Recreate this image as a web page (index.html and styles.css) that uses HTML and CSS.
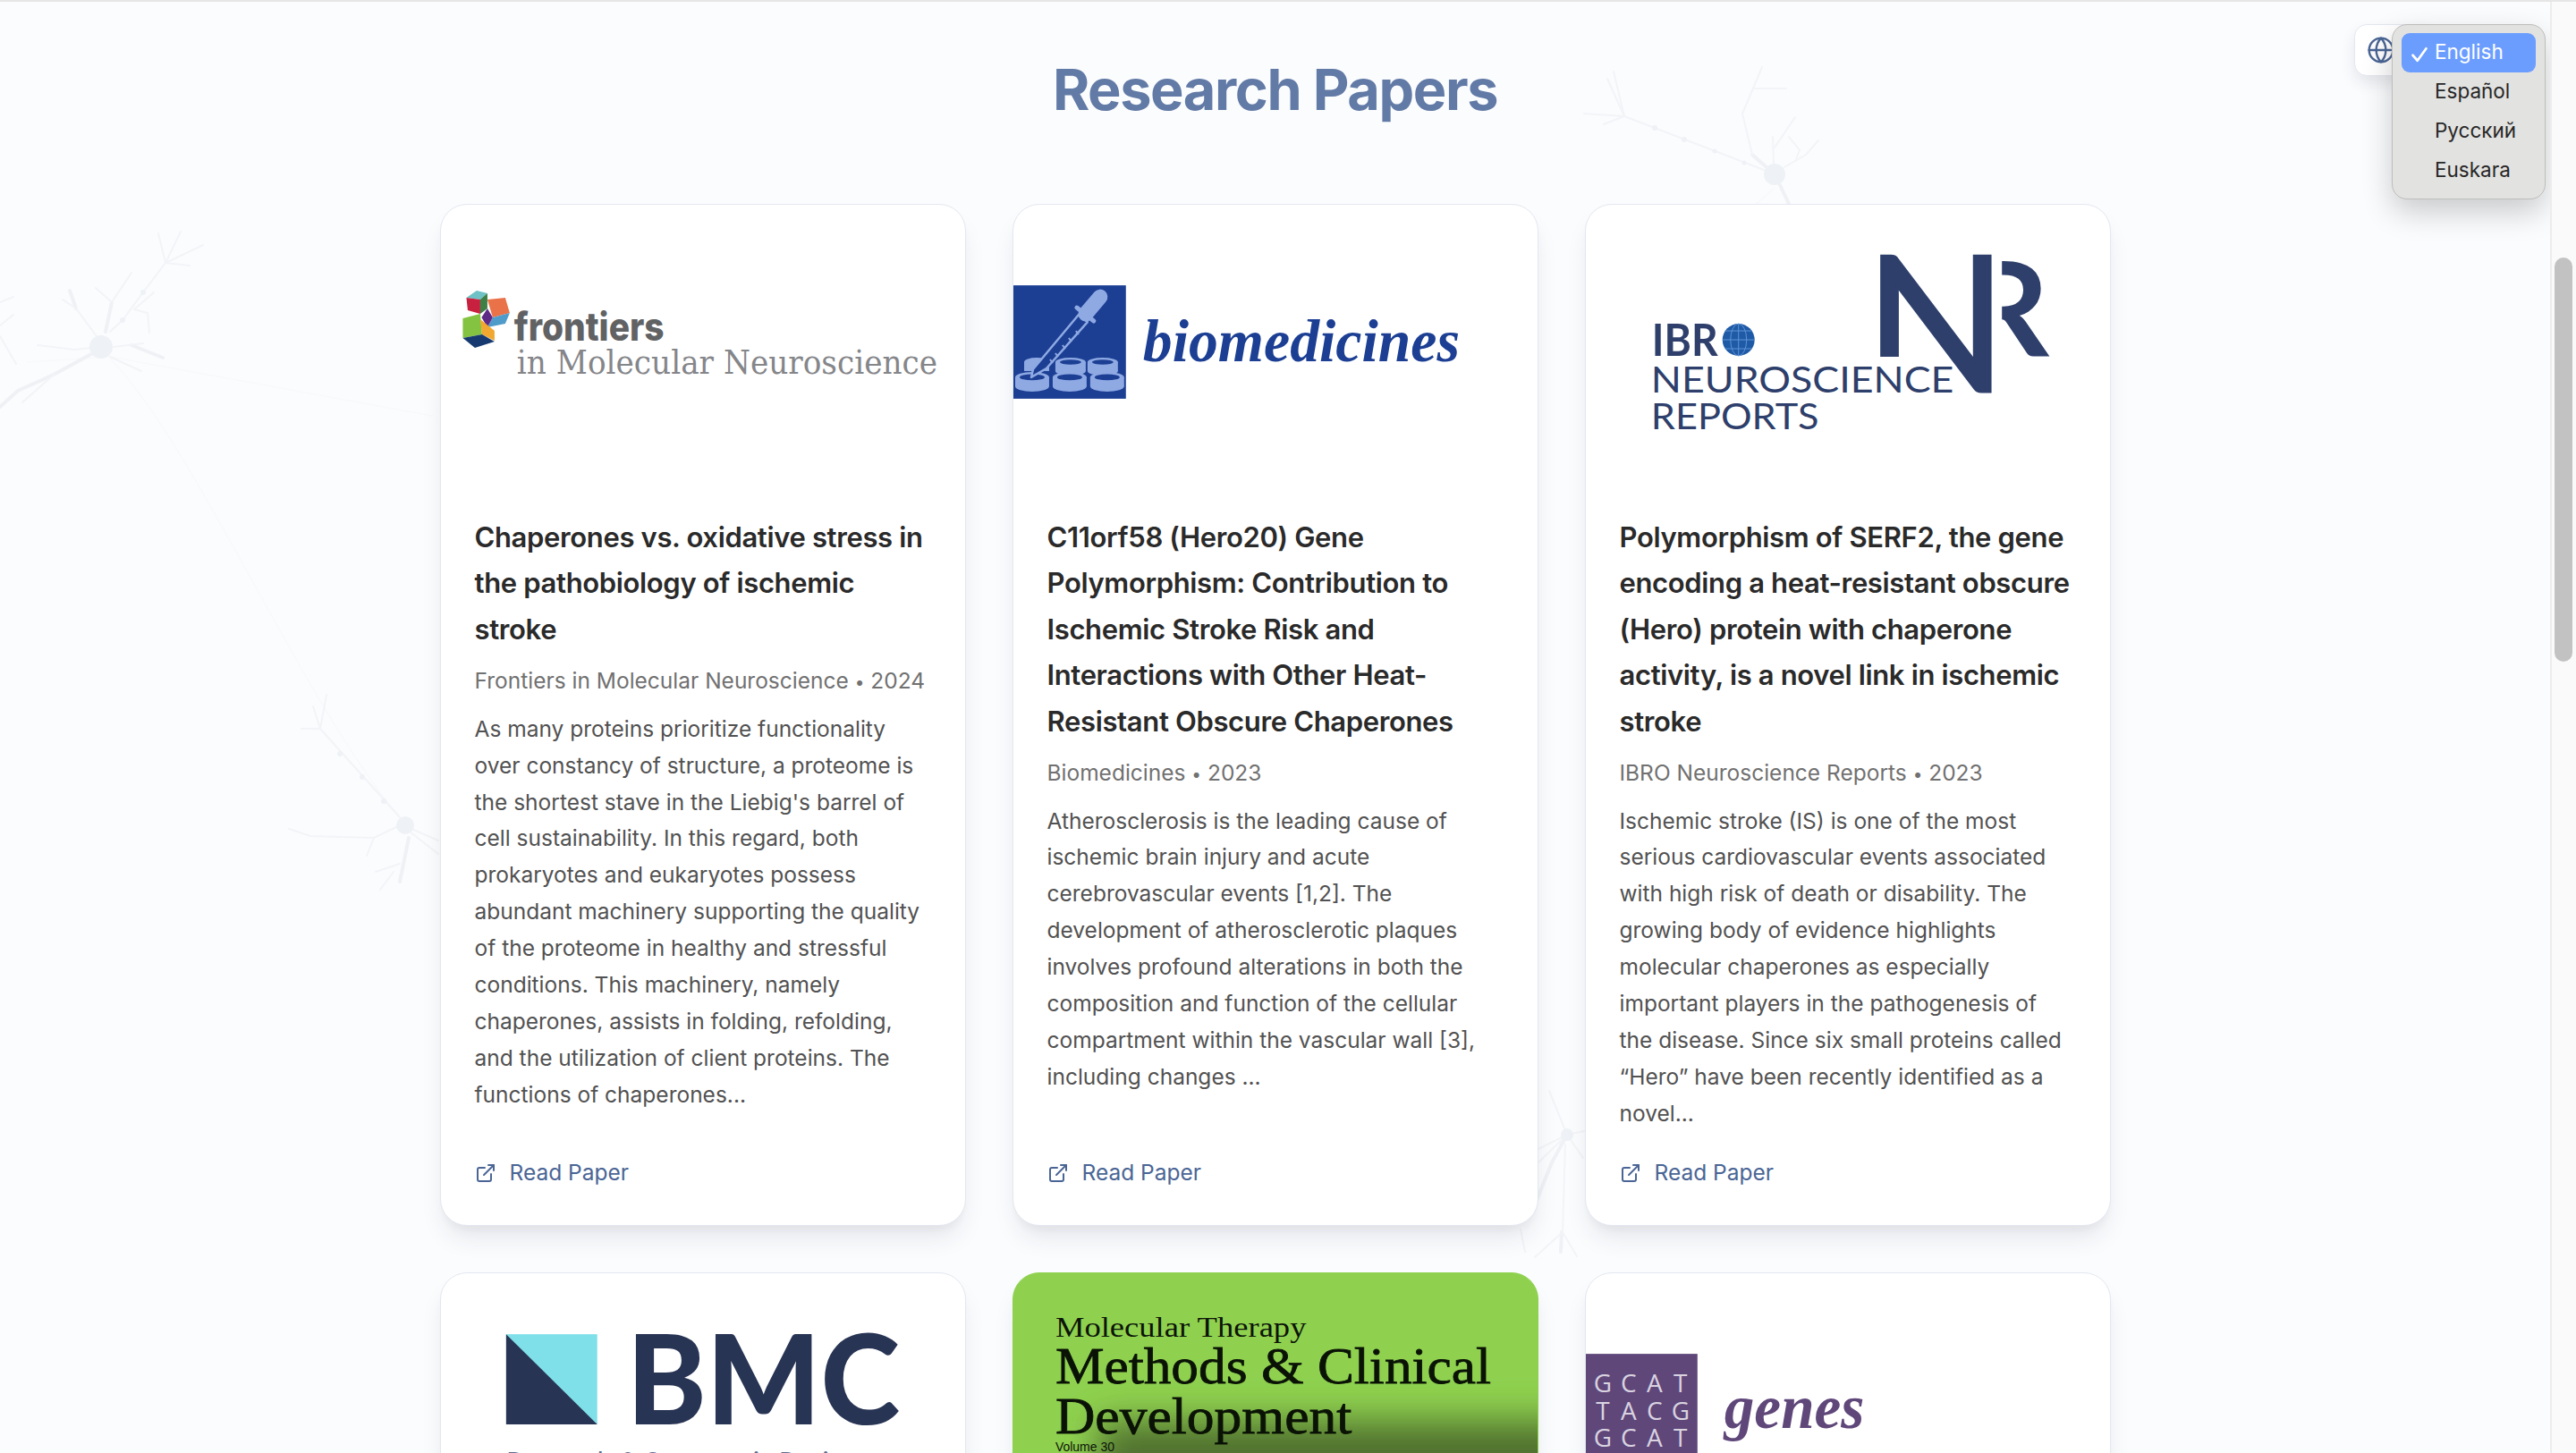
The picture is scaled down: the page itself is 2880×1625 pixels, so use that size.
FILE: index.html
```html
<!DOCTYPE html>
<html lang="en">
<head>
<meta charset="utf-8">
<title>Research Papers</title>
<link rel="stylesheet" href="styles.css">
</head>
<body>
<div class="topline"></div>
<div class="frame">
  <div class="page">
    <svg class="neurons" viewBox="0 0 2851 1625" width="2851" height="1625" aria-hidden="true">
      <g class="axon-faint">
        <path d="M123 399L483 465"/>
        <path d="M123 401C220 500 340 790 447 914"/>
        <path d="M1984 210L1950 240"/>
        <path d="M123 399L30 405"/>
      </g>
      <g class="den-thick">
        <path d="M102 396L60 419L20 437L0 455"/>
        <path d="M118 371L125 338"/>
        <path d="M147 386L182 400"/>
        <path d="M85 345L78 325"/>
        <path d="M447 986L457 937"/>
        <path d="M1959 173L1975 187"/>
        <path d="M1990 207L2000 228"/>
        <path d="M1752 1269L1735 1300L1717 1345"/>
        <path d="M1746 1378L1745 1400"/>
      </g>
      <g class="den">
        <path d="M102 389L83 391L42 386"/>
        <path d="M108 376L85 345L70 335"/>
        <path d="M125 338L147 305"/>
        <path d="M125 338L107 322"/>
        <path d="M123 371L137 358L160 327L185 294L227 274"/>
        <path d="M185 294L202 259"/>
        <path d="M185 294L177 261"/>
        <path d="M185 294L212 297"/>
        <path d="M150 346L172 327"/>
        <path d="M150 346L165 350L167 372"/>
        <path d="M127 388L160 384"/>
        <path d="M123 399L158 415"/>
        <path d="M60 419L25 450"/>
        <path d="M0 376L18 407"/>
        <path d="M0 364L15 352"/>
        <path d="M0 338L15 332"/>
        <path d="M447 914L358 815L365 777"/>
        <path d="M358 815L337 815"/>
        <path d="M358 815L350 790"/>
        <path d="M445 924L418 937L347 935L323 927"/>
        <path d="M418 937L410 957"/>
        <path d="M447 966L420 975"/>
        <path d="M440 975L425 995"/>
        <path d="M458 930L490 955"/>
        <path d="M458 926L490 940"/>
        <path d="M1959 173L1948 127L1970 75"/>
        <path d="M1961 99L1997 99"/>
        <path d="M1983 183L1982 153"/>
        <path d="M1984 165L2007 131"/>
        <path d="M1995 187L2019 173L2033 157"/>
        <path d="M2008 178L2012 168L2000 153"/>
        <path d="M1972 190L1816 130"/>
        <path d="M1816 130L1804 80"/>
        <path d="M1816 130L1797 88"/>
        <path d="M1816 130L1771 127"/>
        <path d="M1816 130L1793 139"/>
        <path d="M1752 1269L1732 1220"/>
        <path d="M1752 1269L1771 1265"/>
        <path d="M1752 1269L1720 1285"/>
        <path d="M1752 1269L1720 1300"/>
        <path d="M1752 1269L1770 1295"/>
        <path d="M1750 1280L1747 1378"/>
        <path d="M1747 1378L1716 1406"/>
        <path d="M1747 1378L1763 1405"/>
        <path d="M1700 1375L1705 1400"/>
      </g>
      <g class="soma">
        <ellipse cx="113" cy="388" rx="13" ry="13"/>
        <ellipse cx="453" cy="923" rx="10" ry="10"/>
        <ellipse cx="1984" cy="195" rx="12" ry="12"/>
        <ellipse cx="1752" cy="1269" rx="7" ry="7"/>
        <circle cx="160" cy="327" r="3"/>
        <circle cx="137" cy="358" r="3"/>
        <circle cx="380" cy="843" r="3"/>
        <circle cx="405" cy="869" r="3"/>
        <circle cx="429" cy="896" r="3"/>
        <circle cx="1850" cy="143" r="3"/>
        <circle cx="1883" cy="156" r="3"/>
        <circle cx="1917" cy="169" r="2.5"/>
        <circle cx="1950" cy="182" r="2.5"/>
      </g>
    </svg>

    <main class="content">
      <h1 class="heading">Research Papers</h1>
      <div class="grid">

        <article class="card">
          <svg class="logo" viewBox="0 0 587 320" aria-label="Frontiers in Molecular Neuroscience">
            <polygon fill="#6ec1c4" points="28.5,104 40,96 52,99 44,106"/>
            <polygon fill="#c8203f" points="28.5,104 44,106 44,122 30,118"/>
            <polygon fill="#3d7f45" points="44,106 52,99 52,116 44,122"/>
            <polygon fill="#ea7248" points="52,106 72,104 77,121 58,126"/>
            <polygon fill="#4f9bc9" points="58,126 77,121 72,133 52,137"/>
            <polygon fill="#5d2a85" points="52,116 58,126 52,137 45.5,126"/>
            <polygon fill="#83c341" points="24.5,127 44,122 46,145 24.5,149"/>
            <polygon fill="#f0a830" points="44,128 60,141 60,152 46,145"/>
            <polygon fill="#163a70" points="24.5,149 46,145 60,153 38,160"/>
            <text class="lg-frontiers" x="82" y="152" textLength="168" lengthAdjust="spacingAndGlyphs">frontiers</text>
            <text class="lg-inmol" x="85" y="189" textLength="471" lengthAdjust="spacingAndGlyphs">in Molecular Neuroscience</text>
          </svg>
          <div class="body">
            <h2 class="title">Chaperones vs. oxidative stress in the pathobiology of ischemic stroke</h2>
            <p class="meta">Frontiers in Molecular Neuroscience <span class="dot">•</span> 2024</p>
            <p class="excerpt">As many proteins prioritize functionality over constancy of structure, a proteome is the shortest stave in the Liebig's barrel of cell sustainability. In this regard, both prokaryotes and eukaryotes possess abundant machinery supporting the quality of the proteome in healthy and stressful conditions. This machinery, namely chaperones, assists in folding, refolding, and the utilization of client proteins. The functions of chaperones...</p>
            <a class="link" href="#"><svg class="ext" viewBox="0 0 24 24"><path d="M15 3h6v6"/><path d="M10 14 21 3"/><path d="M18 13v6a2 2 0 0 1-2 2H5a2 2 0 0 1-2-2V8a2 2 0 0 1 2-2h6"/></svg>Read Paper</a>
          </div>
        </article>

        <article class="card">
          <svg class="logo" viewBox="0 0 587 320" aria-label="Biomedicines">
            <rect x="0" y="90" width="126" height="127" fill="#1c3f94"/>
            <g transform="translate(0 90)">
              <g class="well">
                <ellipse cx="26" cy="86" rx="14" ry="5"/><rect x="12" y="86" width="28" height="10"/>
                <ellipse cx="64" cy="86" rx="17" ry="5"/><rect x="47" y="86" width="34" height="10"/><ellipse cx="64" cy="96" rx="17" ry="5"/>
                <ellipse cx="100" cy="86" rx="17" ry="5"/><rect x="83" y="86" width="34" height="10"/><ellipse cx="100" cy="96" rx="17" ry="5"/>
              </g>
              <g class="well-hole">
                <ellipse cx="64" cy="86" rx="12" ry="2.8"/>
                <ellipse cx="100" cy="86" rx="12" ry="2.8"/>
              </g>
              <g class="well">
                <ellipse cx="21" cy="103" rx="19" ry="6"/><rect x="2" y="103" width="38" height="10"/><ellipse cx="21" cy="113" rx="19" ry="6"/>
                <ellipse cx="63" cy="103" rx="19" ry="6"/><rect x="44" y="103" width="38" height="10"/><ellipse cx="63" cy="113" rx="19" ry="6"/>
                <ellipse cx="105" cy="103" rx="19" ry="6"/><rect x="86" y="103" width="38" height="10"/><ellipse cx="105" cy="113" rx="19" ry="6"/>
              </g>
              <g class="well-hole">
                <ellipse cx="21" cy="103" rx="14" ry="3.4"/>
                <ellipse cx="63" cy="103" rx="14" ry="3.4"/>
                <ellipse cx="105" cy="103" rx="14" ry="3.4"/>
              </g>
              <polygon class="tube" points="73,33 83,41 37,93 20,103 22,94"/>
              <path class="dropper-bulb" d="M81 32L97 13"/>
              <path class="dropper-collar" d="M71 25L90 40"/>
              <path class="dropper-ticks" d="M70 51l3 4M62 59l3 4M55 67l3 4M47 76l3 4M41 83l3 4"/>
            </g>
            <text class="lg-bio" x="145" y="175" textLength="355" lengthAdjust="spacingAndGlyphs">biomedicines</text>
          </svg>
          <div class="body">
            <h2 class="title">C11orf58 (Hero20) Gene Polymorphism: Contribution to Ischemic Stroke Risk and Interactions with Other Heat-Resistant Obscure Chaperones</h2>
            <p class="meta">Biomedicines <span class="dot">•</span> 2023</p>
            <p class="excerpt">Atherosclerosis is the leading cause of ischemic brain injury and acute cerebrovascular events [1,2]. The development of atherosclerotic plaques involves profound alterations in both the composition and function of the cellular compartment within the vascular wall [3], including changes ...</p>
            <a class="link" href="#"><svg class="ext" viewBox="0 0 24 24"><path d="M15 3h6v6"/><path d="M10 14 21 3"/><path d="M18 13v6a2 2 0 0 1-2 2H5a2 2 0 0 1-2-2V8a2 2 0 0 1 2-2h6"/></svg>Read Paper</a>
          </div>
        </article>

        <article class="card">
          <svg class="logo" viewBox="0 0 587 320" aria-label="IBRO Neuroscience Reports">
            <defs>
              <clipPath id="clip-n"><polygon points="300,30 500,30 500,230 362,230 362,170 300,170"/></clipPath>
              <clipPath id="clip-r"><rect x="466" y="40" width="80" height="140"/></clipPath>
            </defs>
            <text class="lg-nr-n" x="312" y="209" textLength="160" lengthAdjust="spacingAndGlyphs" clip-path="url(#clip-n)">N</text>
            <text class="lg-nr-r" x="423" y="170" textLength="96" lengthAdjust="spacingAndGlyphs" clip-path="url(#clip-r)">R</text>
            <text class="lg-ibro" x="74" y="169" textLength="74" lengthAdjust="spacingAndGlyphs">IBR</text>
            <circle cx="171" cy="151" r="18" fill="#1f5aa6"/>
            <g class="globe-lines">
              <ellipse cx="171" cy="151" rx="9" ry="18"/>
              <path d="M153 151h36M156 141h30M156 161h30M171 133v36"/>
            </g>
            <text class="lg-neuro" x="73" y="210" textLength="339" lengthAdjust="spacingAndGlyphs">NEUROSCIENCE</text>
            <text class="lg-neuro" x="73" y="251" textLength="188" lengthAdjust="spacingAndGlyphs">REPORTS</text>
          </svg>
          <div class="body">
            <h2 class="title">Polymorphism of SERF2, the gene encoding a heat-resistant obscure (Hero) protein with chaperone activity, is a novel link in ischemic stroke</h2>
            <p class="meta">IBRO Neuroscience Reports <span class="dot">•</span> 2023</p>
            <p class="excerpt">Ischemic stroke (IS) is one of the most serious cardiovascular events associated with high risk of death or disability. The growing body of evidence highlights molecular chaperones as especially important players in the pathogenesis of the disease. Since six small proteins called “Hero” have been recently identified as a novel...</p>
            <a class="link" href="#"><svg class="ext" viewBox="0 0 24 24"><path d="M15 3h6v6"/><path d="M10 14 21 3"/><path d="M18 13v6a2 2 0 0 1-2 2H5a2 2 0 0 1-2-2V8a2 2 0 0 1 2-2h6"/></svg>Read Paper</a>
          </div>
        </article>

        <article class="card">
          <svg class="logo" viewBox="0 0 587 320" aria-label="BMC">
            <rect x="73" y="68" width="102" height="101" fill="#80e0e9"/>
            <polygon points="73,68 175,169 73,169" fill="#283454"/>
            <text class="lg-bmc" x="208" y="169" textLength="306" lengthAdjust="spacingAndGlyphs">BMC</text>
            <text class="lg-bmc-sub" x="73" y="222">Research &amp; Systematic Reviews</text>
          </svg>
        </article>

        <article class="card card-green">
          <svg class="logo" viewBox="0 0 587 320" aria-label="Molecular Therapy Methods and Clinical Development">
            <defs><filter id="soft" x="-20%" y="-40%" width="140%" height="180%"><feGaussianBlur stdDeviation="20"/></filter></defs>
            <rect x="95" y="166" width="560" height="200" fill="#506f2d" filter="url(#soft)"/>
            <text class="lg-mt" x="47" y="71" textLength="281" lengthAdjust="spacingAndGlyphs">Molecular Therapy</text>
            <text class="lg-mcd" x="47" y="123" textLength="488" lengthAdjust="spacingAndGlyphs">Methods &amp; Clinical</text>
            <text class="lg-mcd" x="47" y="179" textLength="332" lengthAdjust="spacingAndGlyphs">Development</text>
            <text class="lg-vol" x="47" y="199">Volume 30</text>
          </svg>
        </article>

        <article class="card">
          <svg class="logo" viewBox="0 0 587 320" aria-label="Genes">
            <rect x="0" y="90" width="125" height="127" fill="#5f477a"/>
            <g class="lg-gcat">
              <text x="19" y="133">G</text><text x="48" y="133">C</text><text x="77" y="133">A</text><text x="106" y="133">T</text>
              <text x="19" y="164">T</text><text x="48" y="164">A</text><text x="77" y="164">C</text><text x="106" y="164">G</text>
              <text x="19" y="194">G</text><text x="48" y="194">C</text><text x="77" y="194">A</text><text x="106" y="194">T</text>
            </g>
            <text class="lg-genes" x="155" y="173" textLength="157" lengthAdjust="spacingAndGlyphs">genes</text>
          </svg>
        </article>

      </div>
    </main>

    <button class="lang-btn" type="button" aria-label="Language">
      <svg class="globe" viewBox="0 0 24 24"><circle cx="12" cy="12" r="10"/><path d="M12 2a14.5 14.5 0 0 0 0 20 14.5 14.5 0 0 0 0-20"/><path d="M2 12h20"/></svg>
    </button>
    <ul class="menu">
      <li class="menu-item is-active"><svg class="check" viewBox="0 0 24 24"><path d="M2 13l7 8L22 3"/></svg>English</li>
      <li class="menu-item">Español</li>
      <li class="menu-item">Русский</li>
      <li class="menu-item">Euskara</li>
    </ul>
  </div>
  <div class="scrollbar"><div class="thumb"></div></div>
</div>
</body>
</html>
```
FILE: styles.css
```css
* { box-sizing: border-box; }
html, body { margin: 0; height: 100%; overflow: hidden; }
body {
  display: flex;
  flex-direction: column;
  font-family: Inter, "Noto Sans", "Liberation Sans", sans-serif;
  background: #fbfcfe;
  color: #262626;
}
.topline { height: 2px; background: #e6e6e6; flex: none; }
.frame { flex: 1; display: flex; min-height: 0; }
.page { flex: 1; position: relative; overflow: hidden; min-width: 0; }
.neurons { position: absolute; left: 0; top: -2px; }
.neurons path { fill: none; stroke-linecap: round; }
.axon-faint path { stroke: #f8f9fb; stroke-width: 1.5; }
.den path { stroke: #f2f4f7; stroke-width: 2; }
.den-thick path { stroke: #eff1f5; stroke-width: 4; }
.soma { fill: #eef1f5; }

.content { position: relative; padding: 60px 0 0; }
.heading {
  margin: 0 0 90px;
  text-align: center;
  font-size: 63px;
  line-height: 76px;
  font-weight: 700;
  letter-spacing: -1.4px;
  color: #627aa6;
}
.grid {
  width: 1868px;
  margin: 0 auto;
  display: grid;
  grid-template-columns: repeat(3, 588px);
  column-gap: 52px;
  row-gap: 52px;
}
.card {
  display: flex;
  flex-direction: column;
  height: 1143px;
  background: #fff;
  border: 1px solid #e3e7f0;
  border-radius: 30px;
  overflow: hidden;
  box-shadow: 0 18px 28px -6px rgba(30, 40, 60, .1), 0 7px 11px -4px rgba(30, 40, 60, .05);
}
.card-green { background: #8fd14f; border-color: #8fd14f; }
.logo { display: block; width: 100%; height: 320px; flex: none; overflow: visible; }
.body {
  flex: 1;
  display: flex;
  flex-direction: column;
  padding: 26px 38px 38px;
}
.title { margin: 0; font-size: 31px; line-height: 51.4px; font-weight: 600; letter-spacing: -0.35px; color: #2a2a2a; }
.meta { margin: 12px 0 0; font-size: 24.5px; line-height: 41px; color: #717171; }
.dot { font-size: 19px; }
.excerpt { margin: 10.5px 0 0; font-size: 24.5px; line-height: 40.9px; color: #525252; }
.link {
  margin-top: auto;
  display: flex;
  align-items: center;
  gap: 15px;
  font-size: 24.5px;
  line-height: 41px;
  color: #4a6595;
  text-decoration: none;
}
.ext { width: 24px; height: 24px; fill: none; stroke: #4a6595; stroke-width: 2; stroke-linecap: round; stroke-linejoin: round; }

.lang-btn {
  position: absolute;
  left: 2632px;
  top: 25px;
  width: 90px;
  height: 58px;
  padding: 0 0 0 13px;
  display: flex;
  align-items: center;
  background: #fff;
  border: 1px solid #e3e7f0;
  border-radius: 14px;
  box-shadow: 0 8px 16px rgba(30, 40, 60, .1);
}
.globe { width: 32px; height: 32px; fill: none; stroke: #4a6595; stroke-width: 1.8; stroke-linecap: round; stroke-linejoin: round; }
.menu {
  position: absolute;
  left: 2674px;
  top: 25px;
  width: 172px;
  height: 196px;
  margin: 0;
  padding: 9px 10px;
  list-style: none;
  background: #e2e2e0;
  border: 1px solid #bdbdbb;
  border-radius: 17px;
  box-shadow: 0 14px 34px rgba(0, 0, 0, .2);
}
.menu-item {
  position: relative;
  height: 44px;
  padding-left: 37px;
  border-radius: 9px;
  font-size: 22.5px;
  line-height: 41px;
  color: #272727;
}
.is-active { background: #6b9dff; color: #fff; }
.check {
  position: absolute;
  left: 10px;
  top: 15px;
  width: 20px;
  height: 18px;
  fill: none;
  stroke: #fff;
  stroke-width: 3.6;
  stroke-linecap: round;
  stroke-linejoin: round;
}

.scrollbar { width: 29px; flex: none; background: #fafafa; border-left: 2px solid #ececec; padding: 286px 4px 0 3px; }
.thumb { height: 452px; background: #c2c2c2; border-radius: 10px; }

/* logos */
.lg-frontiers { font: 800 44px Inter, sans-serif; fill: #616264; }
.lg-inmol { font: 400 37px "DejaVu Serif", serif; fill: #85868a; }
.lg-bio { font: italic 700 68px "Liberation Serif", serif; fill: #1c3f94; }
.well { fill: #8fa9e3; }
.well-hole { fill: #1c3f94; }
.tube { fill: #1c3f94; stroke: #8fa9e3; stroke-width: 2.5; stroke-linejoin: round; }
.dropper-bulb { fill: none; stroke: #8fa9e3; stroke-width: 17; stroke-linecap: round; }
.dropper-collar { fill: none; stroke: #8fa9e3; stroke-width: 5; stroke-linecap: round; }
.dropper-ticks { fill: none; stroke: #8fa9e3; stroke-width: 2; }
.lg-nr-n { font: 400 212px Lato, sans-serif; fill: #2e3f6b; stroke: #2e3f6b; stroke-width: 3; }
.lg-nr-r { font: 700 148px Lato, sans-serif; fill: #2e3f6b; }
.lg-ibro { font: 700 50px Lato, sans-serif; fill: #2e3f6b; }
.lg-neuro { font: 400 40px Lato, sans-serif; fill: #2e3f6b; }
.globe-lines { fill: none; stroke: #5d94d6; stroke-width: 1; }
.lg-bmc { font: 900 140px Lato, sans-serif; fill: #283454; }
.lg-bmc-sub { font: 400 30px Lato, sans-serif; fill: #5c6a8c; }
.lg-mt { font: 400 32px "Liberation Serif", serif; fill: #0c1408; }
.lg-mcd { font: 400 58px "Liberation Serif", serif; fill: #0a1206; stroke: #0a1206; stroke-width: 0.8; }
.lg-vol { font: 400 14px "Liberation Sans", sans-serif; fill: #0c1408; }
.lg-gcat text { font: 500 28px "Open Sans", sans-serif; fill: #d9d3e0; text-anchor: middle; }
.lg-genes { font: italic 700 70px "Liberation Serif", serif; fill: #5f477a; }
```
